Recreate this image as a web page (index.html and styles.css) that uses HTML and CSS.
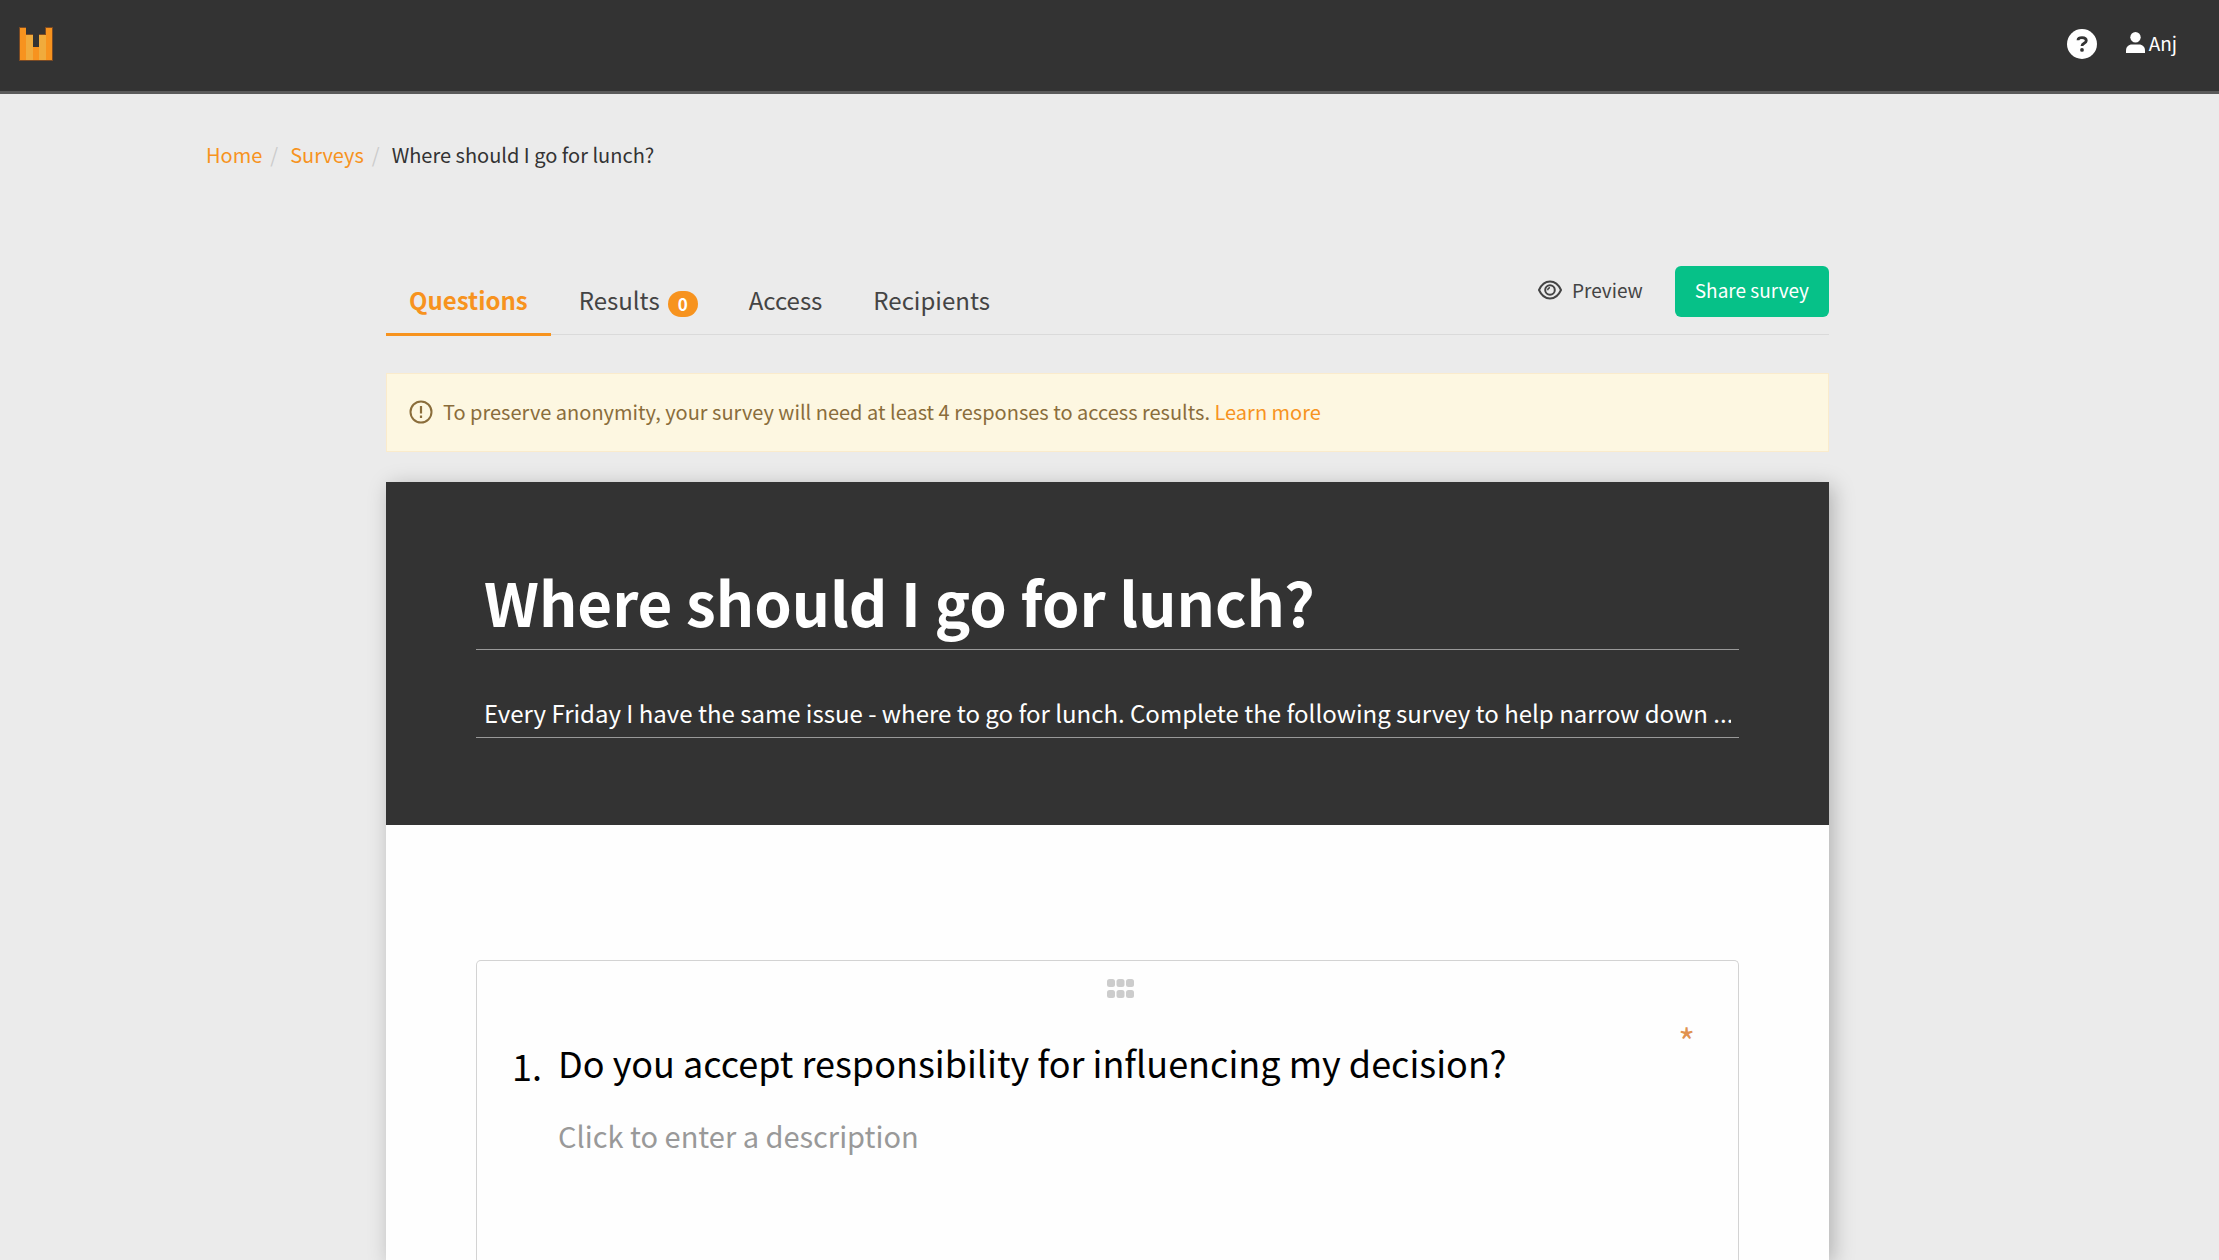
FILE: index.html
```html
<!DOCTYPE html>
<html lang="en">
<head>
<meta charset="utf-8">
<title>Where should I go for lunch?</title>
<meta name="viewport" content="width=device-width, initial-scale=1">
<link rel="stylesheet" href="styles.css">
</head>
<body>
<header class="navbar">
  <a class="brand" href="#" aria-label="Home page">
    <svg width="34" height="34" viewBox="0 0 34 34" shape-rendering="crispEdges" aria-hidden="true">
      <path fill="#7a4a24" d="M0 0h7v7h7v13h6V7h6V0h8v34H0z"/>
      <path fill="#f7931e" d="M1 1h6v32H1zM27 1h6v32h-6zM14 20h6v13h-6z"/>
      <path fill="#f0ab3c" d="M7 8h7v25H7zM20 8h7v25h-7z"/>
    </svg>
  </a>
  <nav class="navbar-links" aria-label="Account">
    <a class="help" href="#" aria-label="Help">
      <svg width="30" height="30" viewBox="0 0 30 30" aria-hidden="true">
        <circle cx="15" cy="15" r="15" fill="#fff"/>
        <path d="M11 11.2C11 9.4 12.4 8.6 15 8.6s4.300 1 4.300 3.100c0 2.600-4.300 2.500-4.300 5.200" fill="none" stroke="#333" stroke-width="2.800"/>
        <circle cx="15" cy="20.900" r="1.900" fill="#333"/>
      </svg>
    </a>
    <a class="account" href="#">
      <svg width="19" height="21" viewBox="0 0 19 21" fill="#fff" aria-hidden="true">
        <circle cx="9.500" cy="5.200" r="5.200"/>
        <path d="M0 21v-2.500C0 15 2.500 12.500 6 12.500h7c3.500 0 6 2.500 6 6V21z"/>
      </svg>
      <span>Anj</span>
    </a>
  </nav>
</header>

<main class="page">
  <nav aria-label="Breadcrumb">
    <ol class="breadcrumb">
      <li><a href="#">Home</a></li>
      <li><a href="#">Surveys</a></li>
      <li aria-current="page">Where should I go for lunch?</li>
    </ol>
  </nav>

  <div class="survey">
    <div class="toolbar">
      <nav class="tabs" aria-label="Survey sections">
        <a class="tab tab-active" href="#" aria-current="true">Questions</a>
        <a class="tab" href="#">Results <span class="badge">0</span></a>
        <a class="tab" href="#">Access</a>
        <a class="tab" href="#">Recipients</a>
      </nav>
      <div class="actions">
        <button class="preview" type="button">
          <svg width="24" height="20" viewBox="0 0 24 20" fill="none" stroke="#444" stroke-width="2" aria-hidden="true">
            <path d="M1 10C3.500 4.500 7.500 1.500 12 1.500S20.500 4.500 23 10c-2.500 5.500-6.500 8.500-11 8.500S3.500 15.500 1 10z"/>
            <circle cx="12" cy="10" r="4.800"/>
            <path d="M9.800 10.200a2.200 2.200 0 0 1 2.200-2.400" stroke-width="1.500"/>
          </svg>
          <span>Preview</span>
        </button>
        <button class="share" type="button">Share survey</button>
      </div>
    </div>

    <div class="alert" role="status">
      <svg width="24" height="24" viewBox="0 0 24 24" fill="none" stroke="#8a6d3b" stroke-width="2" aria-hidden="true">
        <circle cx="12" cy="12" r="10.500"/>
        <path d="M12 6v7.500M12 15.500V18" stroke-width="2.200"/>
      </svg>
      <p>To preserve anonymity, your survey will need at least 4 responses to access results. <a href="#">Learn more</a></p>
    </div>

    <form class="card">
      <div class="card-header">
        <input class="field title" type="text" aria-label="Survey title" value="Where should I go for lunch?">
        <input class="field intro" type="text" aria-label="Survey description" value="Every Friday I have the same issue - where to go for lunch. Complete the following survey to help narrow down ...">
      </div>
      <div class="card-body">
        <section class="question">
          <button class="handle" type="button" aria-label="Move question">
            <svg width="27" height="20" viewBox="0 0 27 20" fill="#ccc" aria-hidden="true">
              <rect x="0" y="0" width="8" height="8" rx="2.500"/><rect x="9.500" y="0" width="8" height="8" rx="2.500"/><rect x="19" y="0" width="8" height="8" rx="2.500"/>
              <rect x="0" y="11" width="8" height="8" rx="2.500"/><rect x="9.500" y="11" width="8" height="8" rx="2.500"/><rect x="19" y="11" width="8" height="8" rx="2.500"/>
            </svg>
          </button>
          <div class="question-row">
            <label class="number" for="question-1">1.</label>
            <div class="question-fields">
              <input class="prompt" id="question-1" type="text" value="Do you accept responsibility for influencing my decision?">
              <input class="description" type="text" aria-label="Question description" placeholder="Click to enter a description">
            </div>
            <span class="required" title="Required">*</span>
          </div>
        </section>
      </div>
    </form>
  </div>
</main>
</body>
</html>
```

FILE: styles.css
```css
* {
  box-sizing: border-box;
}

body {
  display: flex;
  flex-direction: column;
  min-height: 100vh;
  margin: 0;
  background: #ebebeb;
  color: #333;
  font: 20px/30px "Noto Sans CJK SC", "Noto Sans", sans-serif;
}

a {
  color: #f7931e;
  text-decoration: none;
}

button,
input {
  padding: 0;
  border: 0;
  background: none;
  color: inherit;
  font: inherit;
}

svg {
  display: block;
  flex: none;
}

.navbar {
  display: flex;
  align-items: center;
  justify-content: space-between;
  height: 94px;
  padding: 0 42px 4px 19px;
  border-bottom: 3px solid #5a5a5a;
  background: #333;
}

.navbar-links {
  display: flex;
  align-items: center;
  gap: 29px;
}

.account {
  display: flex;
  align-items: center;
  gap: 4px;
  padding-bottom: 2px;
  color: #fff;
  font-size: 19px;
}

.page {
  display: flex;
  flex: 1;
  flex-direction: column;
  padding: 46px 210px 0 206px;
}

.breadcrumb {
  display: flex;
  margin: 0;
  padding: 0;
  list-style: none;
}

.breadcrumb li + li::before {
  padding: 0 12px 0 8px;
  color: #ccc;
  content: "/";
}

.survey {
  display: flex;
  flex: 1;
  flex-direction: column;
  padding: 96px 180px 0;
}

.toolbar {
  display: flex;
  align-items: flex-start;
  justify-content: space-between;
  border-bottom: 1px solid #dadada;
}

.tabs {
  display: flex;
  gap: 5px;
  margin-bottom: -2px;
}

.tab {
  display: flex;
  align-items: center;
  gap: 8px;
  padding: 19px 23px 18px;
  border-bottom: 3px solid transparent;
  color: #444;
  font-size: 24px;
}

.tab-active {
  border-color: #f7931e;
  color: #f7931e;
  font-weight: 700;
}

.badge {
  margin: 6px 0 -2px;
  padding: 0 10px;
  border-radius: 14px;
  background: #f7931e;
  color: #fff;
  font-size: 17px;
  font-weight: 700;
  line-height: 26px;
}

.actions {
  display: flex;
  gap: 32px;
  font-size: 19px;
}

.preview {
  display: flex;
  align-items: center;
  gap: 10px;
  padding-bottom: 4px;
  color: #444;
}

.share {
  padding: 9px 20px 12px;
  border-radius: 6px;
  background: #06c188;
  color: #fff;
}

.alert {
  display: flex;
  align-items: center;
  gap: 10px;
  margin: 38px 0 30px;
  padding: 23px 22px 24px;
  border: 1px solid #faebcc;
  background: #fdf7e1;
  color: #8a6d3b;
}

.alert p {
  margin: 0;
}

.card {
  display: flex;
  flex: 1;
  flex-direction: column;
  background: #fefefe;
  box-shadow: 4px 4px 20px rgba(0, 0, 0, 0.25);
}

.card-header {
  display: flex;
  flex-direction: column;
  gap: 45px;
  padding: 76px 90px 87px;
  background: #333;
  color: #fff;
}

.field {
  width: 100%;
  padding: 0 8px 7px;
  border-bottom: 1px solid #999;
}

.title {
  height: 92px;
  font-size: 60px;
  font-weight: 700;
}

.intro {
  height: 43px;
  font-size: 24px;
}

.card-body {
  display: flex;
  flex: 1;
  flex-direction: column;
  padding: 135px 90px 0;
}

.question {
  flex: 1;
  padding: 18px 43px 24px 35px;
  border: 1px solid #d3d3d3;
  border-bottom: 0;
  border-radius: 5px 5px 0 0;
}

.handle {
  display: block;
  margin: 0 auto;
  padding-left: 34px;
}

.question-row {
  display: flex;
  margin-top: 26px;
  color: #000;
}

.number {
  width: 46px;
  padding-top: 15px;
  font-size: 36px;
  line-height: 50px;
}

.question-fields {
  display: flex;
  flex: 1;
  flex-direction: column;
  gap: 20px;
  padding-top: 7px;
}

.prompt {
  height: 60px;
  font-size: 36px;
}

.description {
  height: 46px;
  font-size: 29px;
}

.description::placeholder {
  color: #999;
  opacity: 1;
}

.required {
  color: #e0924f;
  font-size: 36px;
}
```
